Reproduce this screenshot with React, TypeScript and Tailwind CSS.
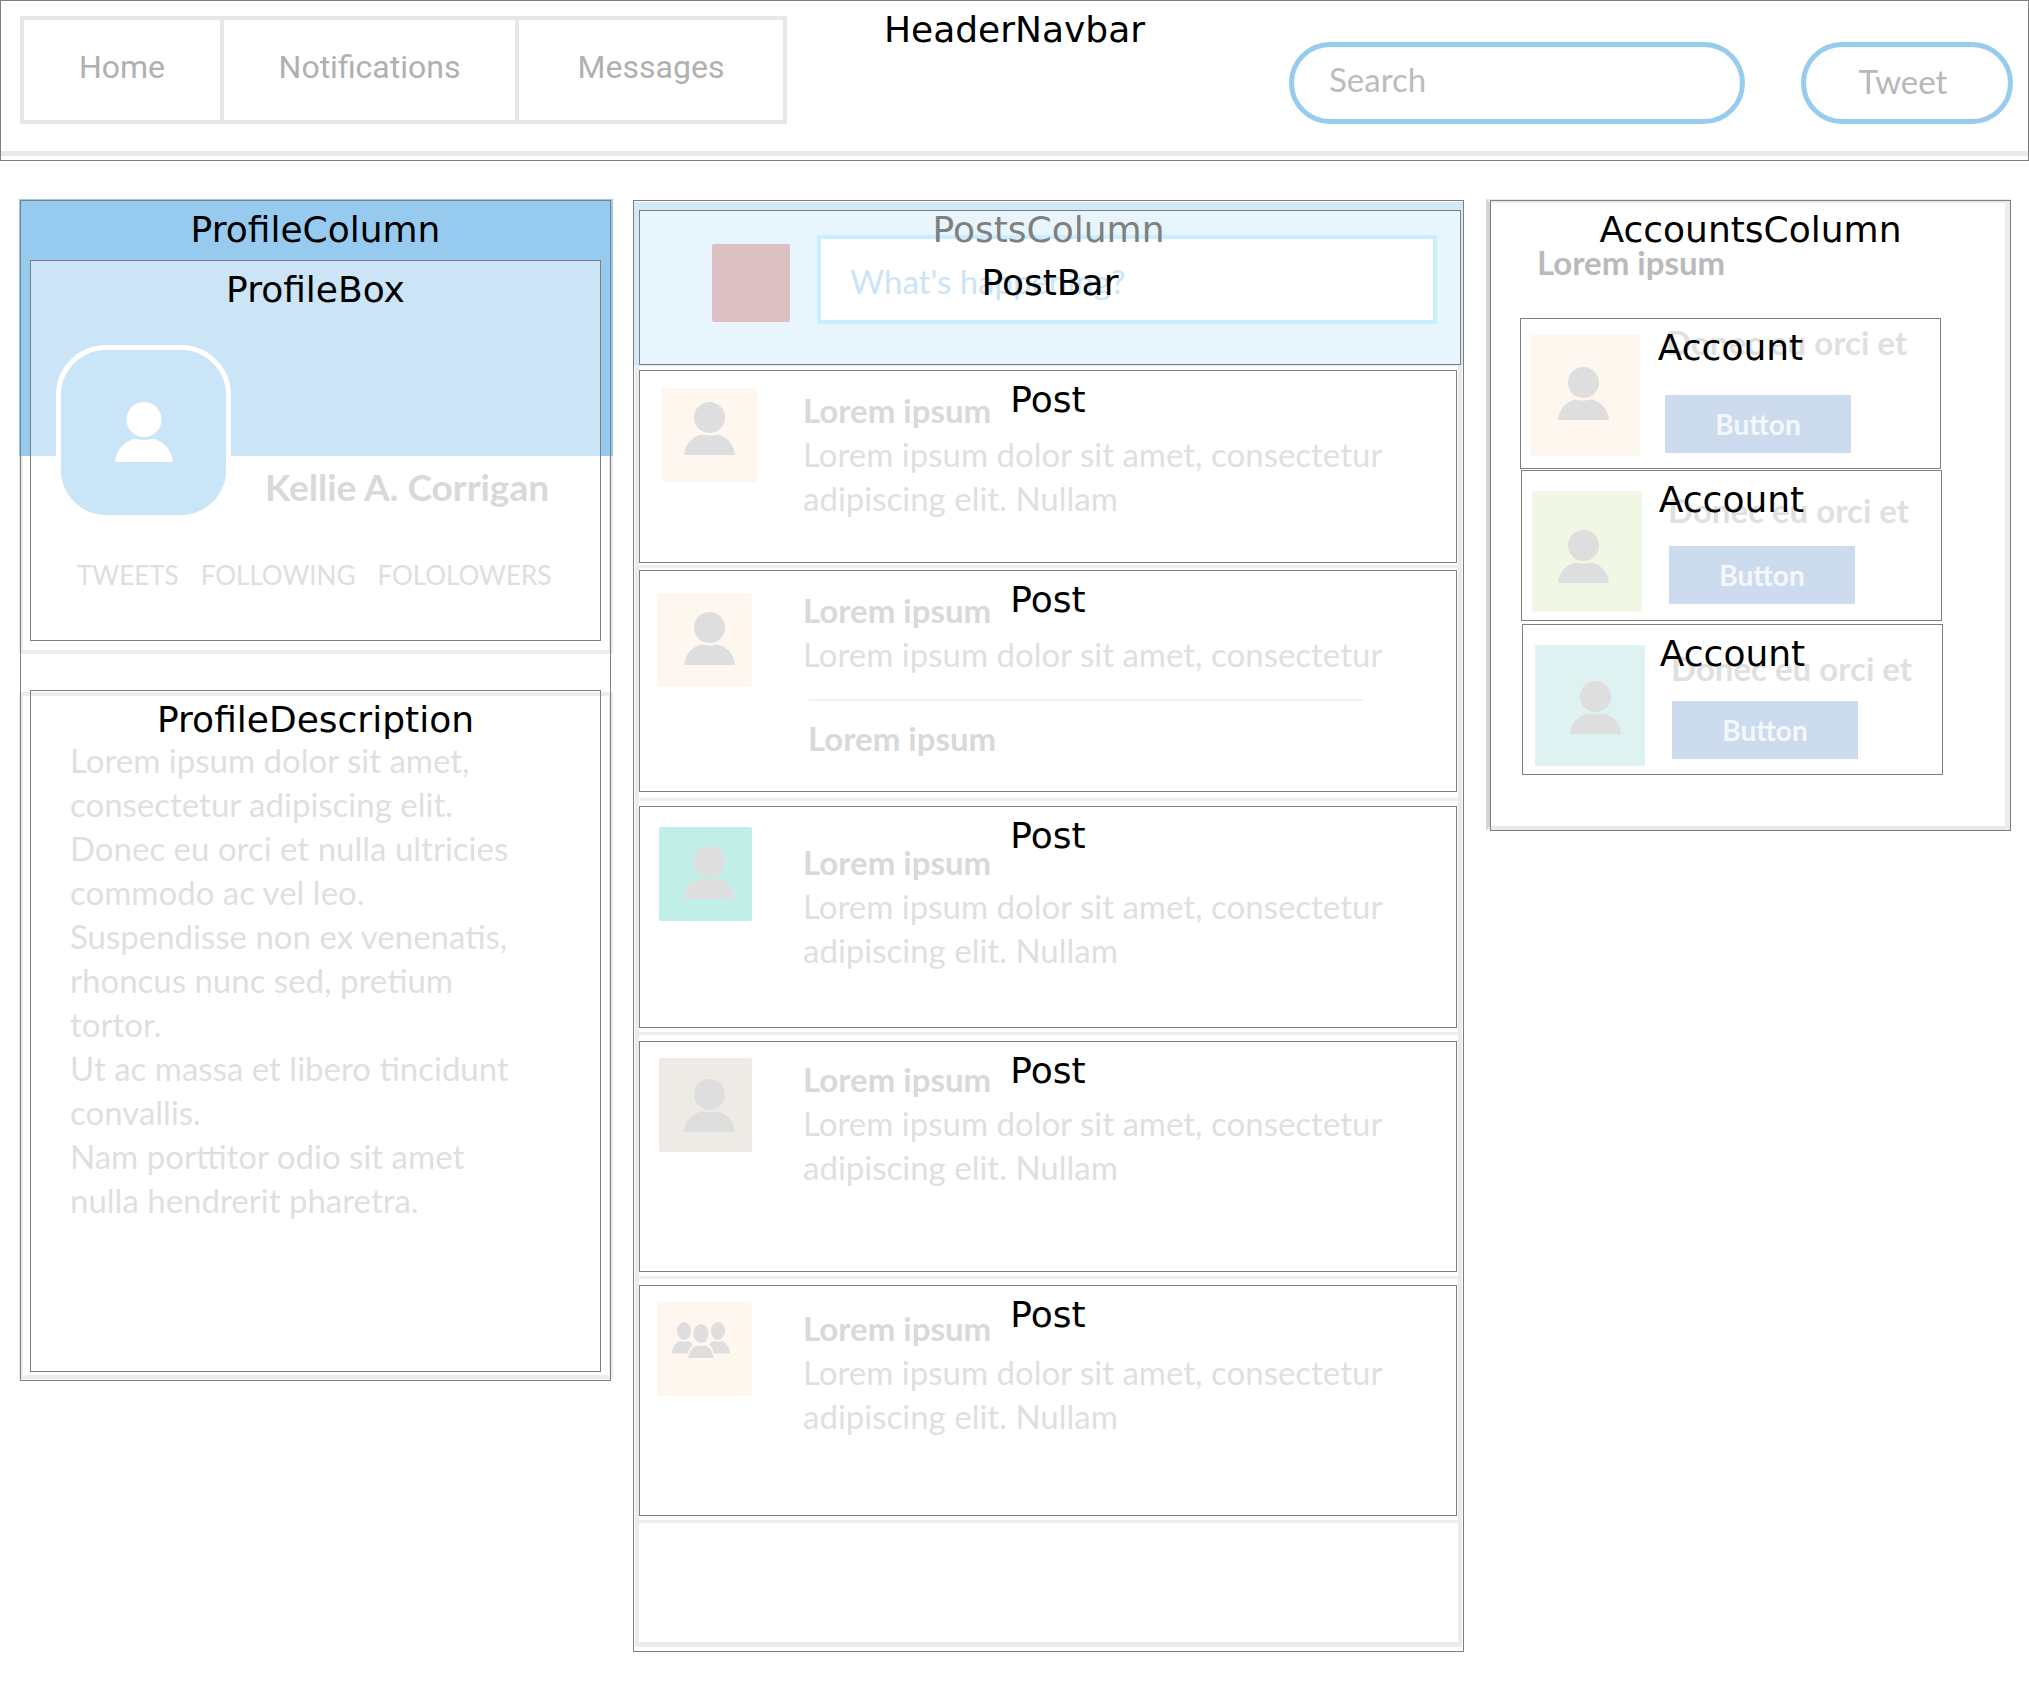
import React from "react";

function FrameLabel({ text, className = "text-black" }: { text: string; className?: string }) {
  return (
    <span
      className={`pointer-events-none absolute inset-x-0 top-2 z-10 text-center font-['DejaVu_Sans',sans-serif] text-[36px] leading-[42px] ${className}`}
    >
      {text}
    </span>
  );
}

function Person({ className }: { className: string }) {
  return (
    <svg viewBox="0 0 51 53" className={className} aria-hidden="true">
      <circle cx="25.5" cy="15.5" r="15.5" fill="currentColor" />
      <path d="M0 53C1 42 8 35 17 32.5Q25.5 34.5 34 32.5C43 35 50 42 51 53Z" fill="currentColor" />
    </svg>
  );
}

function Group({ className }: { className: string }) {
  return (
    <svg viewBox="0 0 58 36" className={className} aria-hidden="true" fill="currentColor">
      <ellipse cx="12" cy="9" rx="7" ry="9" />
      <ellipse cx="46" cy="9" rx="7" ry="9" />
      <ellipse cx="29" cy="11.5" rx="7.5" ry="9.5" />
      <path d="M0 31.5C0 25 4 20.5 8 19Q12 20.5 16 19Q19 20 21 22.5Q17 26 16 31.5Z" />
      <path d="M58 31.5C58 25 54 20.5 50 19Q46 20.5 42 19Q39 20 37 22.5Q41 26 42 31.5Z" />
      <path d="M16.5 36C17 29 21 24.5 25 23.5Q29 25 33 23.5C37 24.5 41 29 41.5 36Z" />
    </svg>
  );
}

function Header() {
  const cell = "flex items-center justify-center pb-[6px] hover:text-[#888]";
  return (
    <header className="relative border border-[#7f7f7f] pb-1">
      <FrameLabel text="HeaderNavbar" />
      <div className="flex items-start justify-between border-b-[5px] border-[#e8e8e8] pt-[15px] pr-[15px] pb-[27px] pl-[19px]">
        <nav className="flex h-[108px] divide-x-4 divide-[#e7e7e7] border-4 border-[#e7e7e7] font-[Roboto,sans-serif] text-[32px] text-[#b0b0b0]">
          <a href="#home" className={`${cell} w-[200px]`}>Home</a>
          <a href="#notifications" className={`${cell} w-[295px]`}>Notifications</a>
          <a href="#messages" className={`${cell} w-[264px]`}>Messages</a>
        </nav>
        <div className="flex gap-[56px] pt-[26px]">
          <input
            type="search"
            aria-label="Search"
            placeholder="Search"
            className="h-[82px] w-[456px] rounded-full border-[5px] border-[#98ccef] bg-white px-[35px] pb-2 text-[33px] text-[#888] outline-none placeholder:text-[#bcbcbc]"
          />
          <button type="button" className="h-[82px] w-[212px] rounded-full border-[5px] border-[#98ccef] pr-2 pb-[2px] text-[33px] text-[#b8b8b8]">
            Tweet
          </button>
        </div>
      </div>
    </header>
  );
}

function ProfileColumn() {
  return (
    <div className="relative">
      <section className="relative h-[455px] border-4 border-t-0 border-[#ececec]">
        <div className="-mx-1 h-[257px] bg-[#97caef]" />
        <div className="absolute top-[61px] right-2 left-[7px] h-[381px] border border-[#7f7f7f] bg-white/50">
          <FrameLabel text="ProfileBox" />
          <div className="flex items-end pt-[84px] pl-[25px]">
            <div className="flex h-[175px] w-[175px] shrink-0 justify-center rounded-[50px] border-[5px] border-white bg-[#cbe5f8] pt-[52px] text-white">
              <Person className="h-[60px] w-[60px]" />
            </div>
            <h1 className="pb-[11px] pl-[34px] text-[37px] leading-[44px] font-bold whitespace-nowrap text-[#d9d9d9]">Kellie A. Corrigan</h1>
          </div>
          <div className="flex gap-[22px] pt-[39px] pl-[46px] text-[26px] leading-[32px] text-[#dedede]">
            <a href="#tweets">TWEETS</a>
            <a href="#following">FOLLOWING</a>
            <a href="#followers">FOLOLOWERS</a>
          </div>
        </div>
      </section>
      <section className="relative mt-[38px] h-[687px] border-4 border-[#ececec]">
        <div className="absolute -top-[6px] right-2 bottom-[3px] left-[7px] border border-[#7f7f7f]">
          <FrameLabel text="ProfileDescription" />
          <p className="pt-[47px] pr-[80px] pl-[39px] text-[33px] leading-[44px] text-[#dfdfdf]">
            Lorem ipsum dolor sit amet, consectetur adipiscing elit.
            <br />
            Donec eu orci et nulla ultricies commodo ac vel leo.
            <br />
            Suspendisse non ex venenatis, rhoncus nunc sed, pretium tortor.
            <br />
            Ut ac massa et libero tincidunt convallis.
            <br />
            Nam porttitor odio sit amet nulla hendrerit pharetra.
          </p>
        </div>
      </section>
      <div className="pointer-events-none absolute top-px right-[2px] -bottom-[2px] left-px border border-[#7f7f7f]">
        <FrameLabel text="ProfileColumn" />
      </div>
    </div>
  );
}

type PostData = {
  box: string;
  avatar: string;
  textPad: string;
  rule: string;
  group?: boolean;
  extra?: string;
};

const posts: PostData[] = [
  { box: "h-[193px]", avatar: "mt-[17px] ml-[22px] w-[95px] bg-[#fef7f0] pl-[22px] pt-[14px]", textPad: "pt-[17px]", rule: "mt-[2px]" },
  { box: "mt-[2px] h-[222px]", avatar: "mt-[22px] ml-[17px] w-[95px] bg-[#fef7f0] pl-[27px] pt-[19px]", textPad: "pt-[17px]", rule: "mt-[6px]", extra: "Lorem ipsum" },
  { box: "mt-[5px] h-[222px]", avatar: "mt-[20px] ml-[19px] w-[93px] bg-[#c1efe7] pl-[25px] pt-[19px]", textPad: "pt-[33px]", rule: "mt-1" },
  { box: "mt-[6px] h-[231px]", avatar: "mt-[16px] ml-[19px] w-[93px] bg-[#eeebe6] pl-[25px] pt-[21px]", textPad: "pt-[15px]", rule: "mt-1" },
  { box: "mt-[6px] h-[231px]", avatar: "mt-[16px] ml-[17px] w-[95px] bg-[#fef7f0] pl-[15px] pt-[20px]", textPad: "pt-[20px]", rule: "mt-1", group: true },
];

function Post({ post }: { post: PostData }) {
  return (
    <article className={`relative mr-px flex border border-[#7f7f7f] bg-white ${post.box}`}>
      <FrameLabel text="Post" />
      <div className="w-[163px] shrink-0">
        <div className={`h-[94px] rounded-[2px] text-[#dedede] ${post.avatar}`}>
          {post.group ? <Group className="h-[36px] w-[58px]" /> : <Person className="h-[53px] w-[51px]" />}
        </div>
      </div>
      <div className={`text-[33px] leading-[44px] text-[#dfdfdf] ${post.textPad}`}>
        <h2 className="font-bold text-[#d9d9d9]">Lorem ipsum</h2>
        <p>
          Lorem ipsum dolor sit amet, consectetur
          {!post.extra && (
            <>
              <br />
              adipiscing elit. Nullam
            </>
          )}
        </p>
        {post.extra && (
          <>
            <hr className="mt-[23px] ml-[6px] w-[555px] border-t-2 border-[#f2f2f2]" />
            <h3 className="mt-[15px] ml-[5px] font-bold text-[#d9d9d9]">{post.extra}</h3>
          </>
        )}
      </div>
    </article>
  );
}

function PostsColumn() {
  return (
    <main className="relative mt-px border border-[#7f7f7f] pt-px pb-1">
      <FrameLabel text="PostsColumn" className="text-[#7f7f7f]" />
      <section className="bg-[#d2eaf8] pt-2 pr-[2px] pb-px pl-[5px]">
        <div className="relative flex h-[155px] border border-[#7f7f7f] bg-[#e8f5fc]">
          <span className="pointer-events-none absolute inset-x-0 top-[51px] z-10 text-center font-['DejaVu_Sans',sans-serif] text-[36px] leading-[42px]">
            PostBar
          </span>
          <div className="mt-[33px] ml-[72px] h-[78px] w-[78px] shrink-0 rounded-[2px] bg-[#dcc0c2]" />
          <input
            type="text"
            aria-label="What's happening?"
            placeholder="What's happening?"
            className="mt-[24px] mr-[23px] ml-[27px] h-[89px] min-w-0 flex-1 border-4 border-[#c9effe] bg-white px-[29px] pt-[2px] text-[33px] text-[#88b8dc] outline-none placeholder:text-[#cbe4f6]"
          />
        </div>
      </section>
      <div className="mr-px ml-px border-x-4 border-b-[5px] border-[#ebebeb] pt-1 pb-[119px]">
        {posts.map((post, i) => (
          <React.Fragment key={i}>
            <Post post={post} />
            <hr className={`border-t-[3px] border-[#eeeeee] ${post.rule}`} />
          </React.Fragment>
        ))}
      </div>
    </main>
  );
}

const accounts = [
  {
    box: "mr-[69px] ml-[29px]",
    avatar: "mt-[16px] ml-[9px] bg-[#fef7f0] pt-[32px] pl-[28px]",
    body: "pt-px pl-[25px]",
    name: "ml-px",
    button: "mt-[31px]",
  },
  {
    box: "mt-px mr-[68px] ml-[30px]",
    avatar: "mt-[20px] ml-[10px] bg-[#f1f7e5] pt-[39px] pl-[26px]",
    body: "pt-[17px] pl-[27px]",
    name: "-ml-px",
    button: "mt-[14px]",
  },
  {
    box: "mt-[3px] mr-[67px] ml-[31px]",
    avatar: "mt-[20px] ml-[12px] bg-[#def3f1] pt-[36px] pl-[35px]",
    body: "pt-[21px] pl-[27px]",
    name: "-ml-px",
    button: "mt-[11px]",
  },
];

function AccountsColumn() {
  return (
    <aside className="ml-[2px] h-[631px] border-4 border-[#e9e9e9] border-l-[#d2d2d2]">
      <div className="relative -mt-[3px] -mr-1 h-[631px] border border-[#7f7f7f] border-r-[#7f7f7f] shadow-[inset_-5px_0_0_#ececec]">
        <FrameLabel text="AccountsColumn" />
        <h2 className="pt-[39px] pl-[46px] text-[33px] leading-[44px] font-bold text-[#bababa]">Lorem ipsum</h2>
        <div className="pt-[34px]">
          {accounts.map((a, i) => (
            <article key={i} className={`relative flex h-[151px] border border-[#7f7f7f] ${a.box}`}>
              <FrameLabel text="Account" />
              <div className={`h-[121px] w-[110px] shrink-0 rounded-[2px] text-[#dedede] ${a.avatar}`}>
                <Person className="h-[53px] w-[51px]" />
              </div>
              <div className={a.body}>
                <h3 className={`text-[33px] leading-[44px] font-bold whitespace-nowrap text-[#e0e0e0] ${a.name}`}>Donec eu orci et</h3>
                <button type="button" className={`block h-[58px] w-[186px] bg-[#ccdbee] text-[28px] font-bold text-[#f4f8fc] ${a.button}`}>
                  Button
                </button>
              </div>
            </article>
          ))}
        </div>
      </div>
    </aside>
  );
}

export default function App() {
  return (
    <div className="min-h-screen bg-white font-[Lato,sans-serif]">
      <Header />
      <div className="grid grid-cols-[594fr_831fr_527fr] items-start gap-5 pt-[38px] pr-[18px] pb-[50px] pl-[19px]">
        <ProfileColumn />
        <PostsColumn />
        <AccountsColumn />
      </div>
    </div>
  );
}
